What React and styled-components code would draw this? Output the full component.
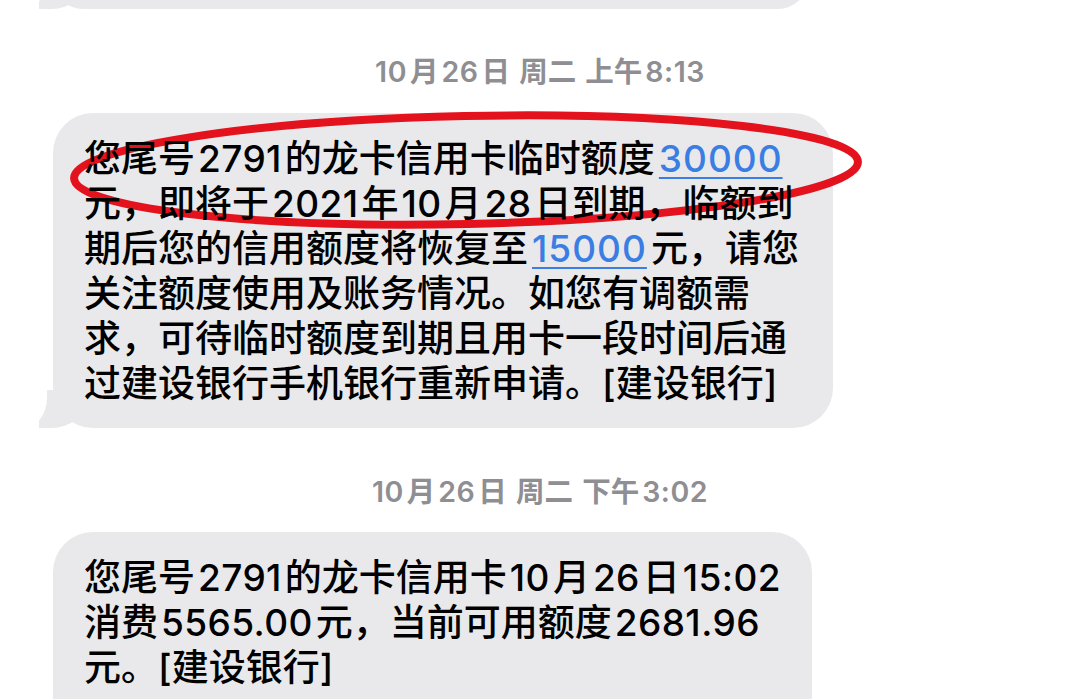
import React from "react";
import styled, { createGlobalStyle } from "styled-components";

const GlobalStyle = createGlobalStyle`
  html, body {
    margin: 0;
    padding: 0;
    background: #fff;
  }
`;

const Page = styled.div`
  position: relative;
  height: 699px;
  overflow: hidden;
  background: #fff;
  font-family: "Inter", "Noto Sans CJK SC", sans-serif;
`;

const Thread = styled.div`
  display: flex;
  flex-direction: column;
  align-items: flex-start;
`;

const Bubble = styled.div`
  position: relative;
  box-sizing: border-box;
  width: ${(p) => p.$width}px;
  min-height: ${(p) => p.$height || 0}px;
  margin-left: 53px;
  margin-top: ${(p) => p.$top}px;
  padding: 23px 31px 22px;
  background: #e9e9eb;
  border-radius: 40px;
  color: #000;
  font-size: 37px;
  font-weight: 500;
  line-height: 45px;
  white-space: nowrap;

  ${(p) =>
    p.$tail &&
    `
    &::before {
      content: "";
      position: absolute;
      left: -14px;
      bottom: 0;
      width: 48px;
      height: 38px;
      background: #e9e9eb;
      border-bottom-right-radius: 36px 30px;
    }
    &::after {
      content: "";
      position: absolute;
      left: -46px;
      bottom: 0;
      width: 40px;
      height: 38px;
      background: #fff;
      border-bottom-right-radius: 24px 30px;
    }
  `}
`;

const Line = styled.div`
  position: relative;
  z-index: 1;
`;

const Num = styled.span`
  margin: 0 3px;
  letter-spacing: 0.4px;
`;

const Link = styled.span`
  margin: 0 4px;
  letter-spacing: 1px;
  color: #3a7ee4;
  text-decoration: underline;
  text-decoration-thickness: 2px;
  text-underline-offset: 5px;
`;

const Stamp = styled.div`
  align-self: stretch;
  margin-top: ${(p) => p.$top}px;
  text-align: center;
  color: #8e8e93;
  font-size: 28.5px;
  font-weight: 600;
  line-height: 34px;
  word-spacing: 2px;

  span {
    margin: 0 3px;
    letter-spacing: 0.5px;
  }
`;

const Mark = styled.svg`
  position: absolute;
  left: 0;
  top: 0;
  pointer-events: none;
`;

export default function App() {
  return (
    <Page>
      <GlobalStyle />
      <Thread>
        <Bubble $width={755} $height={60} $top={-51} $tail />

        <Stamp $top={46}>
          <span>10</span>月<span>26</span>日 周二 上午<span>8:13</span>
        </Stamp>

        <Bubble $width={780} $top={24} $tail>
          <Line>
            您尾号<Num>2791</Num>的龙卡信用卡临时额度<Link>30000</Link>
          </Line>
          <Line>
            元，即将于<Num>2021</Num>年<Num>10</Num>月<Num>28</Num>日到期，临额到
          </Line>
          <Line>
            期后您的信用额度将恢复至<Link>15000</Link>元，请您
          </Line>
          <Line>关注额度使用及账务情况。如您有调额需</Line>
          <Line>求，可待临时额度到期且用卡一段时间后通</Line>
          <Line>过建设银行手机银行重新申请。[建设银行]</Line>
        </Bubble>

        <Stamp $top={47}>
          <span>10</span>月<span>26</span>日 周二 下午<span>3:02</span>
        </Stamp>

        <Bubble $width={759} $top={23}>
          <Line>
            您尾号<Num>2791</Num>的龙卡信用卡<Num>10</Num>月<Num>26</Num>日<Num>15:02</Num>
          </Line>
          <Line>
            消费<Num>5565.00</Num>元，当前可用额度<Num>2681.96</Num>
          </Line>
          <Line>元。[建设银行]</Line>
          <Line>&nbsp;</Line>
        </Bubble>
      </Thread>

      <Mark width="1080" height="699" viewBox="0 0 1080 699">
        <ellipse
          cx="466"
          cy="170"
          rx="392"
          ry="54"
          fill="none"
          stroke="#e3121d"
          strokeWidth="8"
          transform="rotate(-1.2 466 170)"
        />
      </Mark>
    </Page>
  );
}
